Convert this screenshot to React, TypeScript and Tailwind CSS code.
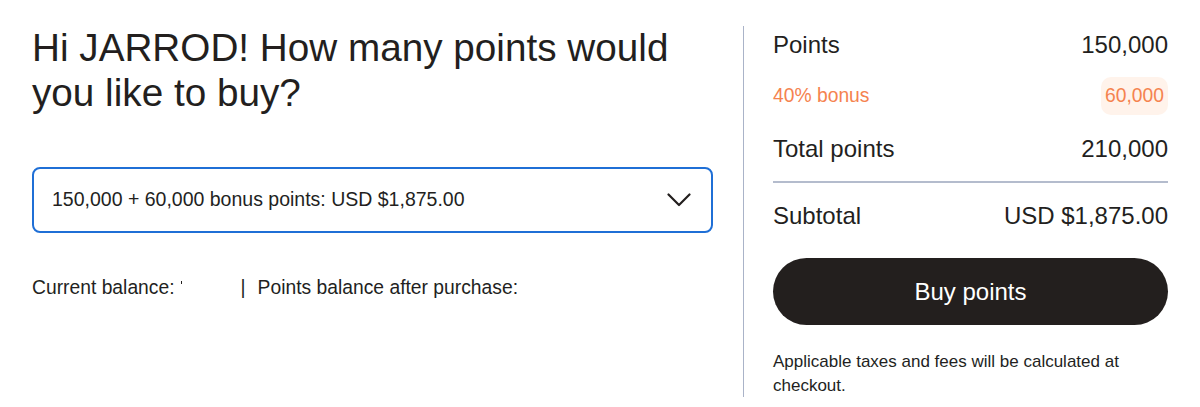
export default function App() {
  const font = { fontFamily: '"Liberation Sans", Arial, sans-serif' };

  return (
    <div className="flex w-[1200px] h-[407px] bg-white text-[#231f1e] overflow-hidden" style={font}>
      {/* Left: selection */}
      <div className="w-[681px] ml-8 pt-[25px]">
        <h1 className="text-[38.7px] leading-[45px] font-normal">
          Hi JARROD! How many points would you like to buy?
        </h1>

        <button className="mt-[52px] flex items-center justify-between w-full h-[66px] pl-[18px] pr-[20px] border-2 border-[#1f6fd6] rounded-[8px] bg-white text-left">
          <span className="text-[19.5px]">150,000 + 60,000 bonus points: USD $1,875.00</span>
          <svg width="24" height="14" viewBox="0 0 24 14" fill="none" className="text-[#231f1e]">
            <path d="M1.5 1.5 L12 12 L22.5 1.5" stroke="currentColor" strokeWidth="2.2" strokeLinecap="round" strokeLinejoin="round" />
          </svg>
        </button>

        <div className="mt-[43px] flex items-center text-[19.3px] leading-6">
          <span>Current balance:</span>
          <span className="w-[66px] h-6 relative">
            <span className="absolute left-[6px] top-[5px] w-px h-[3px] bg-[#231f1e]" />
          </span>
          <span className="mr-[12px]">|</span>
          <span>Points balance after purchase:</span>
        </div>
      </div>

      {/* Divider */}
      <div className="w-px bg-[#aab3c8] mt-[26px] mb-[10px] ml-[30px]" />

      {/* Right: summary */}
      <div className="w-[395px] ml-[29px] pt-[29px]">
        <div className="flex justify-between text-[24px] leading-8">
          <span>Points</span>
          <span>150,000</span>
        </div>

        <div className="mt-4 flex justify-between items-center text-[19.3px] text-[#f5834f]">
          <span>40% bonus</span>
          <span className="h-[38px] px-[4px] flex items-center rounded-[10px] bg-[#fff3eb]">60,000</span>
        </div>

        <div className="mt-[18px] flex justify-between text-[24px] leading-8">
          <span>Total points</span>
          <span>210,000</span>
        </div>

        <div className="mt-4 h-[2px] bg-[#b4bccd]" />

        <div className="mt-[17px] flex justify-between text-[24px] leading-8">
          <span>Subtotal</span>
          <span>USD $1,875.00</span>
        </div>

        <button className="mt-[26px] w-full h-[67px] rounded-full bg-[#231f1e] text-white text-[24px]">
          Buy points
        </button>

        <p className="mt-[25px] text-[17px] leading-6">
          Applicable taxes and fees will be calculated at checkout.
        </p>
      </div>
    </div>
  );
}
